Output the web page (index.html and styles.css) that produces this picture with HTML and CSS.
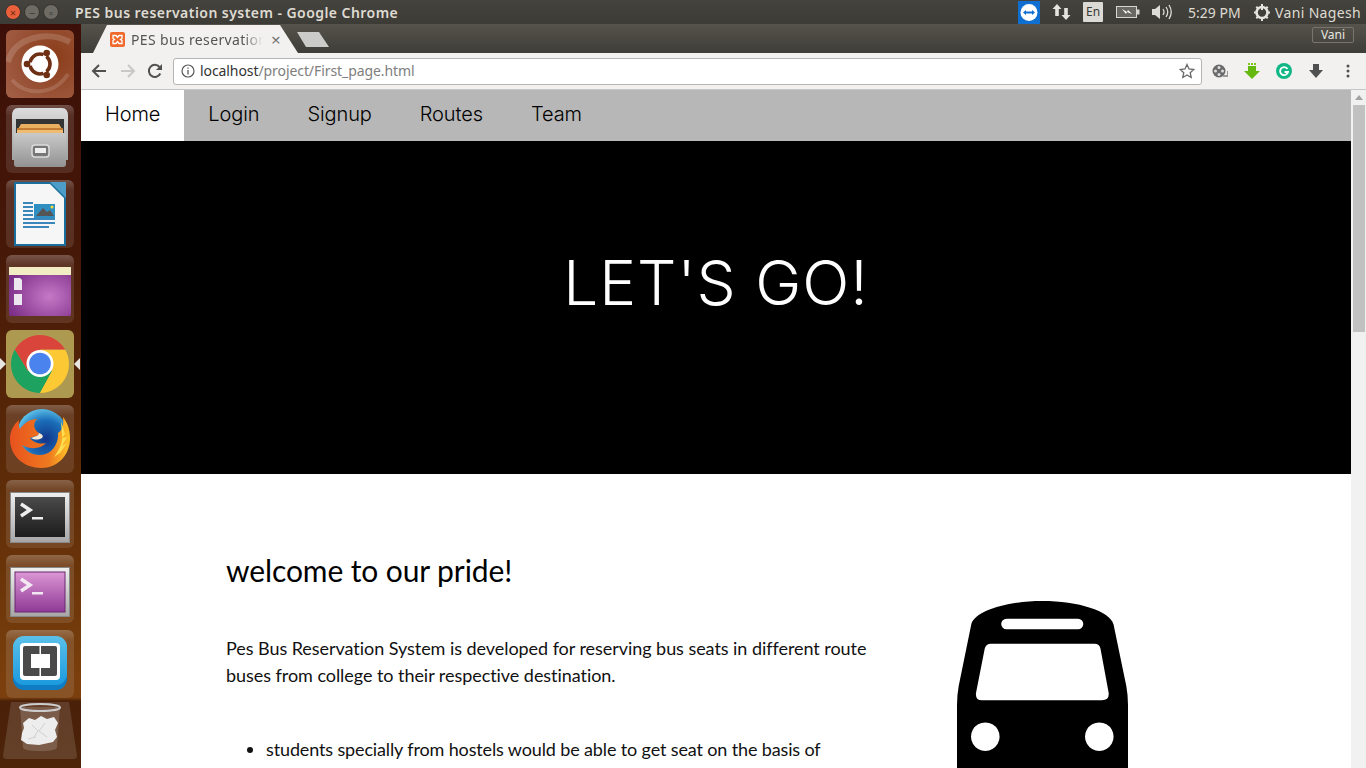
FILE: index.html
```html
<!DOCTYPE html>
<html lang="en">
<head>
<meta charset="utf-8">
<title>PES bus reservation system</title>
<link rel="stylesheet" href="styles.css">
</head>
<body>
<header class="panel">
  <div class="win-buttons">
    <span class="wb wb-close">×</span><span class="wb wb-min">−</span><span class="wb wb-max">▫</span>
  </div>
  <div class="panel-title">PES bus reservation system - Google Chrome</div>
  <div class="indicators">
    <svg class="ind-tv" viewBox="0 0 22 23"><rect width="22" height="23" fill="#0e6fd0"/><circle cx="11" cy="11.500" r="8.500" fill="#fff"/><path d="M5 11.500l3-2.500v1.600h6V9l3 2.500-3 2.500v-1.600H8V14z" fill="#0e6fd0"/></svg>
    <svg class="ind-arrows" viewBox="0 0 19 18"><path d="M5 1l4.500 5H6.800v7H3.200V6H.5zM14 17l-4.500-5h2.700V5h3.600v7h2.700z" fill="#e6e4df"/></svg>
    <span class="ind-en">En</span>
    <svg class="ind-batt" viewBox="0 0 24 12"><rect x=".5" y=".5" width="20" height="11" fill="#6a6862" stroke="#d8d6d0"/><rect x="21" y="3.500" width="2.500" height="5" fill="#d8d6d0"/><path d="M6 3l5 3 1-2 4 4-5-2-1 2z" fill="#fff"/></svg>
    <svg class="ind-vol" viewBox="0 0 21 18"><path d="M1 6h3l5-4v14l-5-4H1z" fill="#dedcd6"/><path d="M12 6q2 3 0 6M15 4q3.500 5 0 10M18 2q4.500 7 0 14" fill="none" stroke="#dedcd6" stroke-width="1.300"/></svg>
    <span class="ind-time">5:29 PM</span>
    <svg class="ind-gear" viewBox="0 0 18 18"><circle cx="9" cy="9.500" r="5.500" fill="none" stroke="#e6e4df" stroke-width="2.600"/><path d="M9 1v6M9 14.500V18M1 9.500h3M14 9.500h3M3.300 3.800l2 2M12.700 13.200l2 2M14.700 3.800l-2 2M5.300 13.200l-2 2" stroke="#e6e4df" stroke-width="2"/></svg>
    <span class="ind-name">Vani Nagesh</span>
  </div>
</header>

<div class="workspace">
  <aside class="launcher">
    <div class="tile tile-ubuntu">
      <svg viewBox="0 0 68 68"><path d="M2 32C8 8 40 0 64 12" fill="none" stroke="#fff" stroke-opacity=".16" stroke-width="6"/><path d="M6 50c14 16 42 16 56-6" fill="none" stroke="#fff" stroke-opacity=".14" stroke-width="4"/><circle cx="34" cy="34" r="18.500" fill="#fff"/><circle cx="34" cy="34" r="10" fill="none" stroke="#6e2f15" stroke-width="3.600"/><path d="M34 34L20 34M34 34L41 22M34 34L41 46" stroke="#fff" stroke-width="3"/><circle cx="21" cy="34" r="3.300" fill="#6e2f15"/><circle cx="40.700" cy="23" r="3.300" fill="#6e2f15"/><circle cx="40.700" cy="45" r="3.300" fill="#6e2f15"/><circle cx="34" cy="34" r="6" fill="#fff"/></svg>
    </div>
    <div class="tile">
      <svg viewBox="0 0 68 68"><defs><linearGradient id="gCab" x1="0" y1="0" x2="0" y2="1"><stop offset="0" stop-color="#c9c9c9"/><stop offset="1" stop-color="#929292"/></linearGradient><linearGradient id="gTop" x1="0" y1="0" x2="0" y2="1"><stop offset="0" stop-color="#dcdcdc"/><stop offset="1" stop-color="#a0a0a0"/></linearGradient></defs><path d="M6 11q0-8 6-8h44q6 0 6 8v44H6z" fill="url(#gTop)"/><rect x="10" y="14" width="48" height="16" fill="#343434"/><path d="M12 24l3-5h38l3 5z" fill="#e8b060"/><rect x="11" y="23" width="46" height="2" fill="#c47c34"/><rect x="11" y="25" width="46" height="3" fill="#eebb70"/><path d="M8 28h52v31q0 3-3 3H11q-3 0-3-3z" fill="url(#gCab)"/><rect x="26" y="40" width="17" height="12" rx="3" fill="#777" stroke="#dcdcdc" stroke-width="1.500"/><rect x="29" y="43" width="11" height="5" fill="#eee"/></svg>
    </div>
    <div class="tile">
      <svg viewBox="0 0 68 68"><path d="M8 2h37l15 15v49H8z" fill="#1b6f9e"/><path d="M10 4h34l14 14v46H10z" fill="#f6f6f6"/><path d="M44 2l16 0v16z" fill="#4c9ec9"/><path d="M17 23h10M17 27h10M17 31h10M17 35h10" stroke="#3b86ba" stroke-width="2"/><rect x="28" y="24" width="21" height="14" fill="#2f8fc2"/><path d="M30 36l7-8 4 4 3-2 4 6z" fill="#555"/><circle cx="46" cy="27" r="1.500" fill="#fd3"/><path d="M17 39h32M17 43h32M17 47h26" stroke="#3b86ba" stroke-width="2"/></svg>
    </div>
    <div class="tile">
      <svg viewBox="0 0 68 68"><defs><radialGradient id="gPur" cx=".65" cy=".6" r=".7"><stop offset="0" stop-color="#c678c6"/><stop offset="1" stop-color="#7c2f88"/></radialGradient></defs><rect x="3" y="12" width="62" height="49" rx="2" fill="url(#gPur)"/><rect x="3" y="12" width="62" height="8" fill="#f2ecc4"/><path d="M8 23h6l2 2v10H8zM8 39h8v11H8z" fill="#ece6ee"/></svg>
    </div>
    <div class="tile tile-chrome">
      <svg viewBox="0 0 68 68"><path d="M8.900 19.500A29 29 0 0 0 34 63L46 41H22z" fill="#1da25f"/><path d="M59.100 19.500A29 29 0 0 1 34 63L46 41V30L34 19.500z" fill="#fcc934"/><path d="M8.900 19.500A29 29 0 0 1 59.100 19.500H34L22 41z" fill="#d9453b"/><circle cx="34" cy="33.500" r="13.500" fill="#fff"/><circle cx="34" cy="33.500" r="10.800" fill="#4b83ee"/></svg>
      <span class="pip pip-left"></span><span class="pip pip-right"></span>
    </div>
    <div class="tile">
      <svg viewBox="0 0 68 68"><defs><radialGradient id="gGlobe" cx=".58" cy=".6" r=".62"><stop offset="0" stop-color="#12358a"/><stop offset=".6" stop-color="#1a6db8"/><stop offset="1" stop-color="#5cc0e8"/></radialGradient><linearGradient id="gFox" x1="0" y1="0" x2="1" y2="0"><stop offset="0" stop-color="#e8521e"/><stop offset=".65" stop-color="#ee7a1f"/><stop offset="1" stop-color="#ffc62a"/></linearGradient></defs><circle cx="36" cy="29" r="25" fill="url(#gGlobe)"/><path d="M4 34C4 52 19 63 35 63C52 63 64 50 64 33C64 24 61 17 57 12C58 20 56 26 52 28C53 38 46 50 34 50C24 50 18 44 16 40C22 44 34 45 40 38C32 40 26 36 24 33C28 31 32 32 33 28C27 24 27 18 31 14C24 14 18 18 14 24C12 20 13 15 13 15C8 19 4 26 4 34Z" fill="url(#gFox)"/><path d="M55 16l4 13-3 4 5-1-5 9 5-3-7 10-6 4c6-8 9-15 8-23z" fill="#ffdf50"/><path d="M25 33c4-2 7-1 8-5 3 1 5 3 3 5-4 2-7 2-11 0z" fill="#fbe8d0"/></svg>
    </div>
    <div class="tile">
      <svg viewBox="0 0 68 68"><defs><linearGradient id="gTerm" x1="0" y1="0" x2="0" y2="1"><stop offset="0" stop-color="#4a4a4a"/><stop offset="1" stop-color="#1c1c1c"/></linearGradient><linearGradient id="gFrame" x1="0" y1="0" x2="0" y2="1"><stop offset="0" stop-color="#efefef"/><stop offset="1" stop-color="#a6a6a6"/></linearGradient></defs><rect x="4.500" y="12.500" width="59" height="50" fill="url(#gFrame)" stroke="#888"/><rect x="9" y="17" width="50" height="40" fill="url(#gTerm)"/><path d="M15 24l9 6-9 6" fill="none" stroke="#eee" stroke-width="3.500"/><rect x="26" y="37" width="11" height="2.500" fill="#eee"/></svg>
    </div>
    <div class="tile">
      <svg viewBox="0 0 68 68"><defs><linearGradient id="gTermP" x1="0" y1="0" x2="0" y2="1"><stop offset="0" stop-color="#dc96d4"/><stop offset="1" stop-color="#8e3a96"/></linearGradient></defs><rect x="4.500" y="12.500" width="59" height="49" fill="url(#gFrame)" stroke="#888"/><rect x="9" y="17" width="50" height="40" fill="url(#gTermP)" stroke="#6b2672"/><path d="M15 24l9 6-9 6" fill="none" stroke="#f2e8f2" stroke-width="3.500"/><rect x="26" y="37" width="11" height="2.500" fill="#f2e8f2"/></svg>
    </div>
    <div class="tile">
      <svg viewBox="0 0 68 68"><defs><linearGradient id="gBr" x1="0" y1="0" x2="0" y2="1"><stop offset="0" stop-color="#5bc0ea"/><stop offset="1" stop-color="#1b9ade"/></linearGradient></defs><rect x="7" y="7" width="54" height="53" rx="11" fill="#0f7cc4"/><rect x="7" y="6" width="54" height="49" rx="11" fill="url(#gBr)"/><rect x="14" y="13" width="40" height="37" rx="4" fill="#fff"/><rect x="17" y="16" width="34" height="30" rx="2" fill="#4a4a4a"/><rect x="25" y="24" width="19" height="14" fill="#fff"/><rect x="33.500" y="16" width="1.500" height="30" fill="#fff"/></svg>
    </div>
    <div class="tile-trash">
      <svg viewBox="0 0 81 60"><path d="M11 1h58l8 54q0 3-4 3H7q-4 0-4-3z" fill="#fff" fill-opacity=".13"/><path d="M20 6l3 40q0 4 17 4t17-4l3-40z" fill="#fff" fill-opacity=".16"/><ellipse cx="40" cy="6.500" rx="20" ry="3.500" fill="none" stroke="#ccc" stroke-width="2"/><path d="M23 22l6-5 6 2 6-4 6 3 7-2 4 6-3 7 2 7-4 5-14 3-12-1-6-4 1-7 2-5z" fill="#ededed"/><path d="M32 24l6 6-4 6M45 22l-6 8 8 6M28 38l8-2" fill="none" stroke="#cfcfcf"/></svg>
    </div>
  </aside>

  <div class="browser">
    <div class="tabstrip">
      <div class="tab">
        <svg class="favicon" viewBox="0 0 15 15"><rect width="15" height="15" rx="2" fill="#f0692c"/><path d="M3 3.500h3l1.500 2 1.500-2h3v3l-1.500 1 1.500 1v3H9l-1.500-2-1.500 2H3v-3l1.500-1L3 6.500z" fill="none" stroke="#fff" stroke-width="1.300"/></svg>
        <span class="tab-title">PES bus reservation</span>
        <span class="tab-close">×</span>
      </div>
      <span class="newtab"></span>
      <span class="profile">Vani</span>
    </div>
    <div class="toolbar">
      <svg class="tb-icon tb-back" viewBox="0 0 16 16"><path d="M15 8H2M8 2L2 8l6 6" fill="none" stroke="#505050" stroke-width="2"/></svg>
      <svg class="tb-icon tb-fwd" viewBox="0 0 16 16"><path d="M1 8h13M8 2l6 6-6 6" fill="none" stroke="#c8c8c8" stroke-width="2"/></svg>
      <svg class="tb-icon tb-reload" viewBox="0 0 16 16"><path d="M13.300 10.500A6 6 0 1 1 12.500 4" fill="none" stroke="#505050" stroke-width="2"/><path d="M15 1v6H9z" fill="#505050"/></svg>
      <div class="omnibox">
        <svg class="omni-info" viewBox="0 0 14 14"><circle cx="7" cy="7" r="6" fill="none" stroke="#5a5a5a" stroke-width="1.200"/><path d="M7 6v4.500M7 3.500v1.300" stroke="#5a5a5a" stroke-width="1.300"/></svg>
        <span class="omni-url"><span class="omni-host">localhost</span>/project/First_page.html</span>
        <svg class="omni-star" viewBox="0 0 16 16"><path d="M8 1.500l2 4.500 4.800.5-3.600 3.200 1 4.800L8 12l-4.200 2.500 1-4.800L1.200 6.500 6 6z" fill="none" stroke="#6a6a6a" stroke-width="1.300"/></svg>
      </div>
      <svg class="ext ext-film" viewBox="0 0 16 16"><circle cx="7" cy="8" r="6.500" fill="#6a6a6a"/><circle cx="7" cy="4.500" r="1.500" fill="#ddd"/><circle cx="7" cy="11.500" r="1.500" fill="#ddd"/><circle cx="3.500" cy="8" r="1.500" fill="#ddd"/><circle cx="10.500" cy="8" r="1.500" fill="#ddd"/><path d="M11 13h5v-5" fill="none" stroke="#999" stroke-width="2"/></svg>
      <svg class="ext ext-green" viewBox="0 0 16 16"><path d="M4 0h2v2H4zM7 0h2v2H7zM10 0h2v2h-2z" fill="#7ec820"/><path d="M4 3h8v5h4l-8 8-8-8h4z" fill="#64b80f"/></svg>
      <svg class="ext ext-gram" viewBox="0 0 16 16"><circle cx="8" cy="8" r="8" fill="#11b886"/><path d="M11.500 6A4 4 0 1 0 12 9H8.500" fill="none" stroke="#fff" stroke-width="1.800"/></svg>
      <svg class="ext ext-down" viewBox="0 0 16 16"><path d="M5 1h6v6h4l-7 8-7-8h4z" fill="#505050"/></svg>
      <svg class="ext-menu" viewBox="0 0 4 14"><circle cx="2" cy="2" r="1.500" fill="#505050"/><circle cx="2" cy="7" r="1.500" fill="#505050"/><circle cx="2" cy="12" r="1.500" fill="#505050"/></svg>
    </div>
    <div class="viewport">
      <main class="page">
        <nav class="nav">
          <a class="nav-link nav-active">Home</a>
          <a class="nav-link">Login</a>
          <a class="nav-link">Signup</a>
          <a class="nav-link">Routes</a>
          <a class="nav-link">Team</a>
        </nav>
        <section class="hero"><h1>LET'S GO!</h1></section>
        <section class="content">
          <div class="copy">
            <h2>welcome to our pride!</h2>
            <p>Pes Bus Reservation System is developed for reserving bus seats in different route buses from college to their respective destination.</p>
            <ul>
              <li>students specially from hostels would be able to get seat on the basis of</li>
            </ul>
          </div>
          <svg class="bus" viewBox="0 0 172 170"><path fill-rule="evenodd" d="M14.300 23.300C18 10 50 0 85.500 0S153 10 156.500 23.300L169.300 85Q171 94 171 104V170H0V104Q0 94 1.700 85ZM49.500 17.700a5.300 5.300 0 0 0 0 10.600H121a5.300 5.300 0 0 0 0-10.600ZM34 42.700q-5 0-6.300 5L19 92q-.800 7.300 6 7.300H145q7.300 0 6.700-7.300L143.500 47.700q-1-5-6-5ZM28.300 121.400a14.300 14.300 0 1 0 .01 0ZM142.300 121.400a14.300 14.300 0 1 0 .01 0Z" fill="#000"/></svg>
        </section>
      </main>
      <div class="scrollbar">
        <span class="sb-arrow"></span>
        <span class="sb-thumb"></span>
      </div>
    </div>
  </div>
</div>
</body>
</html>
```
FILE: styles.css
```css
* { box-sizing: border-box; }
html, body { margin: 0; height: 768px; overflow: hidden; }
body { display: flex; flex-direction: column; font-family: "Lato", sans-serif; background: #000; font-variant-ligatures: none; }
svg { display: block; flex: none; }

/* top panel */
.panel { height: 24px; flex: none; display: flex; align-items: center; background: linear-gradient(#45433e, #3d3b36); color: #dfdbd2; font-family: "Noto Sans", sans-serif; font-size: 14px; }
.win-buttons { width: 75px; flex: none; display: flex; gap: 3px; padding-left: 5px; }
.wb { width: 16px; height: 16px; border-radius: 50%; display: flex; align-items: center; justify-content: center; font-size: 11px; line-height: 1; color: #3b3a36; background: #6d6b64; border: 1px solid #35342f; }
.wb-close { background: #e9603a; color: #6e2a15; }
.panel-title { font-weight: 600; letter-spacing: .45px; white-space: nowrap; }
.indicators { margin-left: auto; display: flex; align-items: center; width: 348px; flex: none; }
.ind-tv { width: 22px; height: 23px; }
.ind-arrows { width: 19px; height: 18px; margin-left: 12px; }
.ind-en { width: 20px; height: 20px; margin-left: 12px; background: #dcdad4; color: #3d3b36; font-size: 12px; text-align: center; line-height: 20px; border-radius: 1px; }
.ind-batt { width: 24px; height: 12px; margin-left: 13px; }
.ind-vol { width: 21px; height: 18px; margin-left: 11px; }
.ind-time { margin-left: 16px; width: 65px; white-space: nowrap; }
.ind-gear { width: 18px; height: 18px; }
.ind-name { margin-left: 4px; letter-spacing: .35px; white-space: nowrap; }

/* launcher */
.workspace { flex: 1; display: flex; min-height: 0; }
.launcher { width: 81px; flex: none; padding: 6px 0 0 6px; display: flex; flex-direction: column; gap: 7px; background: linear-gradient(#3c0f08 0, #461808 30%, #5e2c08 62%, #7a3f0c 88%, #7a3f0c 90.500%, #4a2009 91%, #4d2509 100%); }
.tile { position: relative; width: 68px; height: 68px; flex: none; border-radius: 6px; background: linear-gradient(rgba(255,255,255,.26), rgba(255,255,255,.12) 15%, rgba(255,255,255,.1)); }
.tile svg { width: 68px; height: 68px; }
.tile-ubuntu { background: radial-gradient(circle at 70% 40%, #8a3c18, #a3614a); }
.tile-chrome { background: #ad9a50; }
.tile-trash { margin: -4px 0 0 -6px; width: 81px; height: 60px; flex: none; }
.tile-trash svg { width: 81px; height: 60px; }
.pip { position: absolute; top: 28px; width: 0; height: 0; border-top: 6px solid transparent; border-bottom: 6px solid transparent; }
.pip-left { left: -6px; border-left: 6px solid #e8e6e2; }
.pip-right { right: -6px; border-right: 6px solid #e8e6e2; }

/* browser chrome */
.browser { flex: 1; min-width: 0; display: flex; flex-direction: column; background: #fff; }
.tabstrip { height: 29px; flex: none; display: flex; align-items: flex-end; padding-left: 12px; background: linear-gradient(#55534b, #3e3d38); }
.tab { width: 205px; height: 28px; display: flex; align-items: center; padding: 0 0 0 17px; background: #f2f1f0; clip-path: polygon(0 100%, 14px 0, 187px 0, 100% 100%); font-family: "Noto Sans", sans-serif; font-size: 14px; color: #555; }
.favicon { width: 15px; height: 15px; }
.tab-title { width: 132px; margin-left: 6px; overflow: hidden; letter-spacing: .35px; white-space: nowrap; -webkit-mask-image: linear-gradient(90deg, #000 85%, transparent); mask-image: linear-gradient(90deg, #000 85%, transparent); }
.tab-close { margin-left: 8px; font-size: 17px; line-height: 1; color: #777; }
.newtab { width: 32px; height: 15px; margin: 0 0 6px -1px; background: #cbcbca; clip-path: polygon(0 0, 22px 0, 100% 100%, 9px 100%); }
.profile { margin: 0 12px 10px auto; width: 42px; height: 16px; border: 1px solid #77756e; border-radius: 2px; color: #e8e6e0; font-family: "Noto Sans", sans-serif; font-size: 12px; line-height: 14px; text-align: center; }
.toolbar { height: 37px; flex: none; display: flex; align-items: center; padding-left: 10px; background: #f2f1f0; border-bottom: 1px solid #c6c6c6; }
.tb-icon { width: 16px; height: 16px; }
.tb-fwd { margin-left: 13px; }
.tb-reload { margin-left: 11px; }
.omnibox { width: 1029px; height: 27px; margin-left: 10px; display: flex; align-items: center; padding: 0 6px 0 7px; background: #fff; border: 1px solid #b4b4b4; border-radius: 3px; }
.omni-info { width: 14px; height: 14px; }
.omni-url { margin-left: 5px; margin-top: -2px; font-family: "Noto Sans", sans-serif; font-size: 14px; letter-spacing: -.08px; color: #7e7e7e; white-space: nowrap; }
.omni-host { color: #333; }
.omni-star { width: 16px; height: 16px; margin-left: auto; }
.ext { width: 16px; height: 16px; }
.ext-film { margin-left: 10px; }
.ext-green { margin-left: 16px; }
.ext-gram { margin-left: 16px; }
.ext-down { margin-left: 16px; }
.ext-menu { width: 4px; height: 14px; margin-left: 22px; }

/* page */
.viewport { flex: 1; min-height: 0; display: flex; overflow: hidden; }
.page { flex: 1; min-width: 0; background: #fff; }
.nav { height: 51px; display: flex; background: #b7b7b7; }
.nav-link { padding: 0 24px; font-family: "Inter", sans-serif; font-size: 20px; font-weight: 300; letter-spacing: -.1px; line-height: 49px; color: #000; }
.nav-active { background: #fff; }
.hero { height: 333px; display: flex; align-items: flex-start; justify-content: center; padding-top: 111px; background: #000; color: #fff; }
.hero h1 { margin: 0; font-family: "Inter", sans-serif; font-weight: 300; font-size: 62px; letter-spacing: 1px; line-height: 1; }
.content { display: flex; padding: 0 0 0 145px; background: #fff; }
.copy { width: 645px; flex: none; color: #111; }
.copy h2 { margin: 76px 0 0; font-size: 30px; font-weight: 400; letter-spacing: -.1px; line-height: 40px; color: #000; }
.copy p { margin: 45px 0 0; font-size: 18px; letter-spacing: -.05px; line-height: 27px; }
.copy ul { margin: 47px 0 0; padding-left: 40px; font-size: 18px; letter-spacing: -.135px; line-height: 27px; }
.bus { width: 172px; height: 170px; margin: 127px 0 0 86px; }
.scrollbar { width: 15px; flex: none; display: flex; flex-direction: column; align-items: center; background: #f1f1f1; }
.sb-arrow { width: 0; height: 0; margin: 5px 0 5px; border-left: 4px solid transparent; border-right: 4px solid transparent; border-bottom: 5px solid #a3a3a3; }
.sb-thumb { width: 12px; height: 227px; background: #c1c1c1; }
```
